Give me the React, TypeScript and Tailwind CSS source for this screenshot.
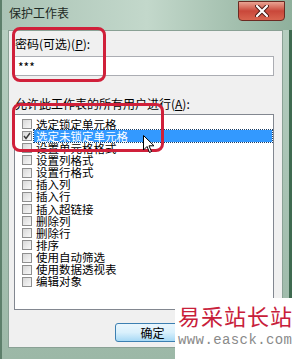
import React from 'react';

const items = [
  '选定锁定单元格',
  '选定未锁定单元格',
  '设置单元格格式',
  '设置列格式',
  '设置行格式',
  '插入列',
  '插入行',
  '插入超链接',
  '删除列',
  '删除行',
  '排序',
  '使用自动筛选',
  '使用数据透视表',
  '编辑对象',
];

const cjk = { fontFamily: '"Noto Sans CJK SC", "Liberation Sans", sans-serif' };

function Check({ on }: { on: boolean }) {
  return (
    <div className="w-[10px] h-[10px] shrink-0 border border-[#8f8f8f] bg-gradient-to-br from-[#d8d8d8] to-[#f8f8f8] flex items-center justify-center">
      {on && (
        <svg width="8" height="8" viewBox="0 0 8 8">
          <path d="M1 4 L3 6.5 L7 1" fill="none" stroke="#3b3b3b" strokeWidth="1.4" />
        </svg>
      )}
    </div>
  );
}

export default function App() {
  return (
    <div className="w-[292px] h-[359px] relative overflow-hidden bg-gradient-to-b from-[#b7cfc1] via-[#a9c3b4] to-[#9cb8a7] border-l-2 border-[#5d7f6b]" style={cjk}>
      {/* 标题栏 */}
      <div className="h-[30px] flex items-start bg-gradient-to-r from-[#aac3b5] via-[#c3d8cb] to-[#8fb09c]">
        <span className="pl-[7px] pt-[6px] text-[12px] leading-[14px] text-[#1e2a24]">保护工作表</span>
        <div className="ml-auto mr-[7px] mt-[1px] w-[47px] h-[20px] rounded-b-[4px] border border-[#6b2a22] bg-gradient-to-b from-[#e8a393] via-[#c9473a] to-[#d8644f] flex items-center justify-center">
          <svg width="14" height="12" viewBox="0 0 14 12">
            <path d="M2 1 L12 11 M12 1 L2 11" stroke="#4a1a14" strokeWidth="4" strokeLinecap="round" />
            <path d="M2 1 L12 11 M12 1 L2 11" stroke="#ffffff" strokeWidth="2.2" strokeLinecap="round" />
          </svg>
        </div>
      </div>

      {/* 对话框内容 */}
      <div className="ml-[6px] mr-[9px] h-[318px] border border-[#8aa195] bg-[#f0f0f0] flex flex-col pt-[5px]">
        <div className="pl-[6px] h-[16px] leading-[16px] text-[12px] text-black">
          密码(可选)(<u>P</u>):
        </div>
        <div className="ml-[5px] mt-[4px] w-[260px] h-[20px] border border-[#abadb3] bg-white pl-[3px] text-[12px] leading-[20px] text-black">
          ***
        </div>
        <div className="pl-[6px] mt-[20px] h-[16px] leading-[16px] text-[12px] text-black">
          允许此工作表的所有用户进行(<u>A</u>):
        </div>
        <div className="ml-[5px] mt-[2px] w-[260px] h-[196px] border border-[#828790] bg-white pt-[3px]">
          {items.map((t, i) => (
            <div key={t} className="h-[12.15px] flex items-center pl-[7px]">
              <Check on={i === 1} />
              <span
                className={
                  i === 1
                    ? 'ml-[2px] pl-[2px] flex-1 mr-[1px] h-[12px] bg-[#3399ff] text-white outline-1 outline-dotted outline-[#1a3e66] text-[11.5px] leading-[12px] relative z-10'
                    : 'ml-[2px] pl-[2px] text-[11.5px] leading-[11px] text-black'
                }
              >
                {t}
              </span>
            </div>
          ))}
        </div>
        <div className="mt-[13px] flex gap-[6px] pl-[106px]">
          <div className="w-[75px] h-[19px] rounded-[3px] border border-[#3c7fb1] bg-gradient-to-b from-[#eaf6fd] via-[#d9f0fc] to-[#a7d9f5] text-[12px] leading-[17px] text-center text-black">
            确定
          </div>
          <div className="w-[75px] h-[19px] rounded-[3px] border border-[#707070] bg-gradient-to-b from-[#f2f2f2] to-[#d0d0d0]" />
        </div>
      </div>

      {/* 右侧背景条 */}
      <div className="absolute right-0 top-[30px] w-[3px] h-[329px] bg-[#3f6a50]" />

      {/* 红色标注框 */}
      <div className="absolute left-[10px] top-[27px] w-[94px] h-[55px] rounded-[8px] border-[3px] border-[#d0203a]" />
      <div className="absolute left-[10px] top-[103px] w-[152px] h-[49px] rounded-[8px] border-[3px] border-[#d0203a] z-20" />

      {/* 鼠标指针 */}
      <svg className="absolute left-[141px] top-[135px] z-20" width="12" height="19" viewBox="0 0 12 19">
        <path d="M0.5 0.5 L0.5 15 L4 11.5 L6.5 17.5 L8.5 16.5 L6 10.8 L11 10.8 Z" fill="#fff" stroke="#000" strokeWidth="1" />
      </svg>

      {/* 水印 */}
      <div className="absolute left-[173px] top-[298px] right-0 bottom-0 bg-white pl-[3px] pt-[4px]">
        <div className="text-[22px] leading-[26px] tracking-[1px] text-[#c8203a] whitespace-nowrap" style={{ fontFamily: '"Noto Sans CJK SC", serif' }}>
          易采站长站
        </div>
        <div className="mt-[4px] text-[14px] leading-[16px] tracking-[0.4px] text-[#8a8a8a] whitespace-nowrap" style={{ fontFamily: '"Liberation Mono", monospace' }}>
          www.easck.com
        </div>
      </div>
    </div>
  );
}
